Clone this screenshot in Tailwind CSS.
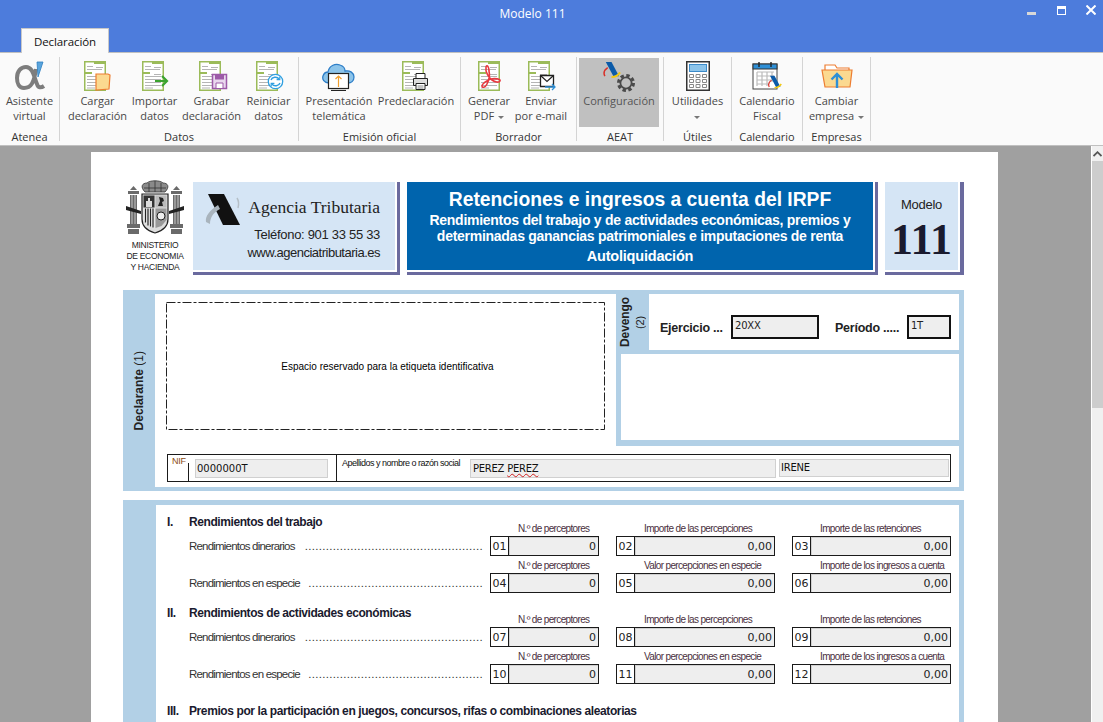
<!DOCTYPE html>
<html lang="es">
<head>
<meta charset="utf-8">
<title>Modelo 111</title>
<script src="https://cdn.jsdelivr.net/npm/@tailwindcss/browser@4"></script>
</head>
<body class="bg-[#a0a0a0]">
<svg class="hidden" width="0" height="0">
  <defs>
    <symbol id="doc" viewBox="0 0 22 30">
      <rect x="0.75" y="0.75" width="20.5" height="28.5" fill="#fff" stroke="#9bbb59" stroke-width="1.5"/>
      <rect x="10" y="0" width="12" height="3" fill="#9bbb59"/>
      <rect x="0" y="11" width="8" height="2" fill="#9bbb59"/>
      <path d="M3 5.5h6M12 6.5h7M3 8.5h15M12 13.5h7M3 15.5h16M3 18.5h16M3 21.5h16M3 24.5h16M3 27h8" stroke="#b5b5b5" stroke-width="1" fill="none"/>
    </symbol>
    <symbol id="aeat" viewBox="0 0 20 20">
      <path d="M4 1h6l8 15h-6z" fill="#0b5aa8"/>
      <path d="M10 17c4 0 7-2 9-5" stroke="#f2c811" stroke-width="2" fill="none"/>
      <path d="M3 16C1 12 3 9 6 7" stroke="#d8312a" stroke-width="1.6" fill="none"/>
    </symbol>
  </defs>
</svg>

<div class="w-[1103px] h-[722px] overflow-hidden flex flex-col">
  <!-- barra de titulo -->
  <div class="relative h-[52px] shrink-0 bg-[#4d7cdc]">
    <div class="text-center pt-[6px] pr-[38px] text-white text-[12px] leading-[16px] font-['Open_Sans',sans-serif]">Modelo 111</div>
    <div class="absolute left-[1027px] top-[12px] w-[9px] h-[3px] bg-[#d8d8d8]"></div>
    <div class="absolute left-[1057px] top-[6px] w-[9px] h-[9px] border border-t-[3px] border-white"></div>
    <svg class="absolute left-[1086px] top-[5px]" width="10" height="10" viewBox="0 0 10 10"><path d="M0.5 0.5l9 9M9.5 0.5l-9 9" stroke="#fff" stroke-width="2"/></svg>
    <div class="absolute left-[21px] top-[28px] w-[88px] h-[25px] bg-[#fafafa] border border-b-0 border-[#c8c8c8] text-center text-[11.5px] leading-[25px] tracking-[-0.1px] text-[#111] font-['Open_Sans',sans-serif]">Declaración</div>
  </div>

  <!-- cinta -->
  <div class="h-[94px] shrink-0 flex bg-[#fafafa] border-y border-[#c0c0c0] font-['Open_Sans',sans-serif] text-[11px] leading-[15px] text-[#484848]">
    <!-- Atenea -->
    <div class="w-[59px] flex flex-col">
      <div class="h-[76px] flex justify-center pt-[8px]">
        <div class="flex flex-col items-center w-[58px]">
          <svg width="32" height="30" viewBox="0 0 32 30" class="shrink-0">
            <path d="M22 8C20 22 17 27 10 27 5 27 3 22 3 17 3 10 7 6 12 6 19 6 20 16 23 23 24 27 27 27 30 25" fill="none" stroke="#7d7d7d" stroke-width="4"/>
            <path d="M23 1h6l-5 15z" fill="#5aa5dd" stroke="#2f7fc0" stroke-width="0.8"/>
          </svg>
          <div class="text-center mt-[2px]">Asistente<br>virtual</div>
        </div>
      </div>
      <div class="text-center text-[#333]">Atenea</div>
    </div>
    <div class="w-px h-[84px] mt-[4px] bg-[#d4d4d4]"></div>

    <!-- Datos -->
    <div class="w-[238px] flex flex-col">
      <div class="h-[76px] flex pt-[8px] pl-[9px]">
        <div class="flex flex-col items-center w-[57px]">
          <svg width="32" height="30" viewBox="0 0 32 30">
            <use href="#doc" x="2" y="0" width="22" height="30"/>
            <path d="M14 13h12l2 1-1 14-13 1z" fill="#fbd990" stroke="#ed7d31" stroke-width="1.2"/>
          </svg>
          <div class="text-center mt-[2px] whitespace-nowrap">Cargar<br>declaración</div>
        </div>
        <div class="flex flex-col items-center w-[57px]">
          <svg width="32" height="30" viewBox="0 0 32 30">
            <use href="#doc" x="3" y="0" width="22" height="30"/>
            <path d="M16 20h12M23 15l5 5-5 5" fill="none" stroke="#3ba32f" stroke-width="2.2"/>
          </svg>
          <div class="text-center mt-[2px]">Importar<br>datos</div>
        </div>
        <div class="flex flex-col items-center w-[57px]">
          <svg width="32" height="30" viewBox="0 0 32 30">
            <use href="#doc" x="3" y="0" width="22" height="30"/>
            <path d="M16.5 13.5h14v14h-14z" fill="#e9d8ee" stroke="#9d5aa8" stroke-width="1.5"/>
            <path d="M19 13.5h9v5h-9z" fill="#9d5aa8"/>
            <path d="M20 22h7v5.5h-7z" fill="#fff" stroke="#9d5aa8"/>
          </svg>
          <div class="text-center mt-[2px] whitespace-nowrap">Grabar<br>declaración</div>
        </div>
        <div class="flex flex-col items-center w-[57px]">
          <svg width="32" height="30" viewBox="0 0 32 30">
            <use href="#doc" x="3" y="0" width="22" height="30"/>
            <circle cx="22.5" cy="20.5" r="7.2" fill="#fff" stroke="#2e9fe0" stroke-width="1.3"/>
            <path d="M18 19c1-3 6-4 8-1M27 22c-1 3-6 4-8 1" fill="none" stroke="#2e9fe0" stroke-width="1.4"/>
            <path d="M26.8 15.5v3.2h-3.2M18.2 25.5v-3.2h3.2" fill="none" stroke="#2e9fe0" stroke-width="1.2"/>
          </svg>
          <div class="text-center mt-[2px]">Reiniciar<br>datos</div>
        </div>
      </div>
      <div class="text-center text-[#333]">Datos</div>
    </div>
    <div class="w-px h-[84px] mt-[4px] bg-[#d4d4d4]"></div>

    <!-- Emision oficial -->
    <div class="w-[161px] flex flex-col">
      <div class="h-[76px] flex pt-[8px] pl-[5px]">
        <div class="flex flex-col items-center w-[70px]">
          <svg width="34" height="30" viewBox="0 0 34 30">
            <path d="M7 22C2 22 0 18 1 15c1-3 3-4 5-4 1-6 7-9 12-7 3 1 5 3 5 6 5-1 9 2 9 6s-3 6-6 6z" fill="#8cc4ea" stroke="#2f7fc8" stroke-width="1.3"/>
            <rect x="6.5" y="12.5" width="20" height="15" fill="#fff" stroke="#222" stroke-width="1.2"/>
            <path d="M9 29.5h15" stroke="#222" stroke-width="1.2"/>
            <path d="M16.5 26V15.5M13.5 18l3-3 3 3" fill="none" stroke="#f0a030" stroke-width="1.2"/>
          </svg>
          <div class="text-center mt-[2px] whitespace-nowrap">Presentación<br>telemática</div>
        </div>
        <div class="flex flex-col items-center w-[84px]">
          <svg width="32" height="30" viewBox="0 0 32 30">
            <use href="#doc" x="2" y="0" width="22" height="30"/>
            <path d="M16 12.5h9v5h-9z" fill="#fff" stroke="#222"/>
            <path d="M13.5 17.5h14v7h-14z" fill="#ddd" stroke="#222"/>
            <path d="M16 22.5h9v6h-9z" fill="#fff" stroke="#222"/>
            <path d="M17.5 25h6M17.5 27h6" stroke="#888"/>
          </svg>
          <div class="text-center mt-[2px] whitespace-nowrap">Predeclaración</div>
        </div>
      </div>
      <div class="text-center text-[#333]">Emisión oficial</div>
    </div>
    <div class="w-px h-[84px] mt-[4px] bg-[#d4d4d4]"></div>

    <!-- Borrador -->
    <div class="w-[115px] flex flex-col">
      <div class="h-[76px] flex pt-[8px] pl-[2px]">
        <div class="flex flex-col items-center w-[52px]">
          <svg width="32" height="30" viewBox="0 0 32 30">
            <use href="#doc" x="5" y="0" width="22" height="30"/>
            <path d="M13 6c-1 5 3 11 6 13 3 2 7 3 8 1s-5-3-9-2c-4 1-9 5-9 7s3 2 5-2 3-9 2-13c0-4-2-7-3-4z" fill="none" stroke="#e9383f" stroke-width="1.6"/>
          </svg>
          <div class="text-center mt-[2px]">Generar<br>PDF<span class="inline-block ml-[4px] align-middle border-x-[3px] border-t-[3px] border-x-transparent border-t-[#777]"></span></div>
        </div>
        <div class="flex flex-col items-center w-[52px]">
          <svg width="32" height="30" viewBox="0 0 32 30">
            <use href="#doc" x="3" y="0" width="22" height="30"/>
            <path d="M15.5 14.5h13v11h-13z" fill="#fff" stroke="#222" stroke-width="1.3"/>
            <path d="M15.5 14.5l6.5 6 6.5-6" fill="none" stroke="#222" stroke-width="1.2"/>
            <path d="M20 26h10M27 23l3 3-3 3" fill="none" stroke="#2e8fd6" stroke-width="1.3"/>
          </svg>
          <div class="text-center mt-[2px] whitespace-nowrap">Enviar<br>por e-mail</div>
        </div>
      </div>
      <div class="text-center text-[#333]">Borrador</div>
    </div>
    <div class="w-px h-[84px] mt-[4px] bg-[#d4d4d4]"></div>

    <!-- AEAT -->
    <div class="w-[86px] flex flex-col">
      <div class="h-[76px] pt-[5px] pl-[2px]">
        <div class="w-[80px] h-[69px] bg-[#c0c0c0] flex flex-col items-center pt-[3px]">
          <svg width="36" height="32" viewBox="0 0 36 32">
            <use href="#aeat" x="1" y="0" width="19" height="19"/>
            <g fill="none" stroke="#4a4a4a">
              <circle cx="25" cy="22" r="7.5" stroke-width="3" stroke-dasharray="3.4 2.5"/>
              <circle cx="25" cy="22" r="5.6" stroke-width="1.8"/>
            </g>
          </svg>
          <div class="text-center text-[#555] whitespace-nowrap">Configuración</div>
        </div>
      </div>
      <div class="text-center text-[#333]">AEAT</div>
    </div>
    <div class="w-px h-[84px] mt-[4px] bg-[#d4d4d4]"></div>

    <!-- Utiles -->
    <div class="w-[67px] flex flex-col">
      <div class="h-[76px] flex flex-col items-center pt-[8px]">
        <svg width="24" height="30" viewBox="0 0 24 30">
          <rect x="0.75" y="0.75" width="22.5" height="28.5" fill="#fff" stroke="#333" stroke-width="1.5"/>
          <rect x="3.5" y="3.5" width="17" height="7" fill="#8cc4ea" stroke="#3b8ac9"/>
          <path d="M3.5 13.5h4v3h-4zM10 13.5h4v3h-4zM16.5 13.5h4v3h-4zM3.5 18.5h4v3h-4zM10 18.5h4v3h-4zM16.5 18.5h4v3h-4zM3.5 23.5h4v3h-4zM10 23.5h4v3h-4zM16.5 23.5h4v3h-4z" fill="#fff" stroke="#888"/>
        </svg>
        <div class="text-center mt-[2px]">Utilidades<br><span class="inline-block align-middle border-x-[3px] border-t-[3px] border-x-transparent border-t-[#777]"></span></div>
      </div>
      <div class="text-center text-[#333]">Útiles</div>
    </div>
    <div class="w-px h-[84px] mt-[4px] bg-[#d4d4d4]"></div>

    <!-- Calendario -->
    <div class="w-[70px] flex flex-col">
      <div class="h-[76px] flex flex-col items-center pt-[8px]">
        <svg width="30" height="30" viewBox="0 0 30 30">
          <rect x="1" y="3" width="24" height="25" fill="#fff" stroke="#444"/>
          <rect x="1" y="3" width="24" height="5" fill="#2e8fd6" stroke="#333"/>
          <path d="M7 1v5M19 1v5" stroke="#222" stroke-width="1.4"/>
          <path d="M5 11h17M5 15h17M5 19h17M5 23h12M5 11v14M10 11v14M15 11v14M20 11v10" stroke="#bbb" stroke-width="1.2" fill="none"/>
          <use href="#aeat" x="15" y="14" width="15" height="15"/>
        </svg>
        <div class="text-center mt-[2px]">Calendario<br>Fiscal</div>
      </div>
      <div class="text-center text-[#333]">Calendario</div>
    </div>
    <div class="w-px h-[84px] mt-[4px] bg-[#d4d4d4]"></div>

    <!-- Empresas -->
    <div class="w-[67px] flex flex-col">
      <div class="h-[76px] flex flex-col items-center pt-[8px]">
        <svg width="32" height="30" viewBox="0 0 32 30">
          <path d="M4 9V4h10l2 3h12v5" fill="#fff" stroke="#ed7d31" stroke-width="1.2"/>
          <path d="M1 9h30l-2 17H4z" fill="#fbd990" stroke="#ed7d31" stroke-width="1.2"/>
          <path d="M16 27V13M10.5 18.500L16 13l5.500 5.500" fill="none" stroke="#2e8fd6" stroke-width="2.4"/>
        </svg>
        <div class="text-center mt-[2px] whitespace-nowrap">Cambiar<br>empresa<span class="inline-block ml-[4px] align-middle border-x-[3px] border-t-[3px] border-x-transparent border-t-[#777]"></span></div>
      </div>
      <div class="text-center text-[#333]">Empresas</div>
    </div>
    <div class="w-px h-[84px] mt-[4px] bg-[#d4d4d4]"></div>
  </div>

  <!-- area del documento -->
  <div class="flex-1 flex overflow-hidden">
    <div class="flex-1 overflow-hidden pt-[6px] pl-[91px]">
      <div class="w-[907px] h-[900px] bg-white pt-[30px] pl-[32px] font-['Liberation_Sans',sans-serif] text-[#222]">

        <!-- cabecera -->
        <div class="flex h-[93px]">
          <div class="w-[64px] mr-[6px] flex flex-col items-center">
            <svg width="60" height="58" viewBox="0 0 60 58" class="-mt-[2px] shrink-0">
              <g fill="#6a6a6a">
                <rect x="5" y="15" width="7" height="29"/><rect x="48" y="15" width="7" height="29"/>
                <rect x="2" y="44" width="13" height="4"/><rect x="45" y="44" width="13" height="4"/>
                <rect x="3" y="49" width="11" height="5"/><rect x="46" y="49" width="11" height="5"/>
                <rect x="3" y="11" width="11" height="3"/><rect x="46" y="11" width="11" height="3"/>
                <path d="M5 10l3.500-4 3.500 4zM48 10l3.500-4 3.500 4z"/>
              </g>
              <path d="M7 15v29M10 15v29M50 15v29M53 15v29" stroke="#ddd" stroke-width="0.8"/>
              <path d="M1 26l15 5v3L1 30zM59 26l-15 5v3l15-4z" fill="#222"/>
              <path d="M20 12C15 7 17 3 22 3c3-3 13-3 16 0 5 0 7 4 2 9z" fill="#8a8a8a" stroke="#333" stroke-width="0.8"/>
              <path d="M24 3v9M30 1v11M36 3v9M19 8h22" stroke="#333" stroke-width="0.8"/>
              <path d="M17 14h26v25c0 8-6 12-13 14-7-2-13-6-13-14z" fill="#ddd" stroke="#222" stroke-width="1.2"/>
              <rect x="18.500" y="15.500" width="11" height="12" fill="#333"/>
              <path d="M21 27v-6h2v-3h2v3h2v6z" fill="#ddd"/>
              <rect x="30.500" y="15.500" width="11" height="12" fill="#bbb"/>
              <path d="M33 26l2-5-1-4 4 1 1 3-2 1 1 4z" fill="#222"/>
              <path d="M18.500 28.500h11v20l-5-2-6-6z" fill="#eee"/>
              <path d="M20.500 28.500v14M23 28.500v17M25.500 28.500v18M28 28.500v19" stroke="#222" stroke-width="1.200"/>
              <path d="M30.500 28.500h11V40l-5 6-6 2z" fill="#999"/>
              <circle cx="36" cy="36" r="4" fill="#eee" stroke="#222"/>
            </svg>
            <div class="mt-[2px] text-[8.5px] leading-[11px] text-center tracking-[-0.3px] text-[#222] whitespace-nowrap">MINISTERIO<br>DE ECONOMIA<br>Y HACIENDA</div>
          </div>

          <div class="w-[207px] h-[93px] pr-[2px] pb-[2px] border-r-[3px] border-b-[3px] border-[#6a6a9e]">
            <div class="relative h-[88px] bg-[#d5e5f5]">
              <svg class="absolute left-[12px] top-[10px]" width="38" height="36" viewBox="0 0 38 36">
                <path d="M3 2h16l16 31H18z" fill="#111"/>
                <path d="M1 30C0 24 5 18 13 13l2 4C9 20 5 25 5 32z" fill="#a9b4bd"/>
                <path d="M32 6c2 3 2 6 1 10" fill="none" stroke="#b5bfc7" stroke-width="1.500"/>
              </svg>
              <div class="absolute right-[15px] top-[12px] font-['Liberation_Serif',serif] text-[17.5px] leading-[26px] text-[#222] whitespace-nowrap">Agencia Tributaria</div>
              <div class="absolute right-[15px] top-[44px] text-[13px] leading-[18px] text-right tracking-[-0.3px] whitespace-nowrap">Teléfono: 901 33 55 33<br><span class="tracking-[-0.5px]">www.agenciatributaria.es</span></div>
            </div>
          </div>

          <div class="ml-[7px] w-[471px] h-[93px] pr-[2px] pb-[2px] border-r-[3px] border-b-[3px] border-[#6a6a9e]">
            <div class="h-[88px] bg-[#0064ad] text-white text-center font-bold">
              <div class="pt-[5px] text-[19.3px] leading-[25px]">Retenciones e ingresos a cuenta del IRPF</div>
              <div class="text-[14px] leading-[16px] tracking-[-0.27px]">Rendimientos del trabajo y de actividades económicas, premios y<br>determinadas ganancias patrimoniales e imputaciones de renta</div>
              <div class="mt-[2px] text-[14.5px] leading-[20px] tracking-[-0.2px]">Autoliquidación</div>
            </div>
          </div>

          <div class="ml-[7px] w-[79px] h-[93px] pr-[2px] pb-[2px] border-r-[4px] border-b-[3px] border-[#6a6a9e]">
            <div class="h-[88px] bg-[#d5e5f5] text-center">
              <div class="pt-[15px] text-[13px] leading-[15px] tracking-[-0.3px]">Modelo</div>
              <div class="mt-[6px] font-['Liberation_Serif',serif] font-bold text-[44px] leading-[44px] text-[#1a1a2e]">111</div>
            </div>
          </div>
        </div>

        <!-- Declarante -->
        <div class="mt-[15px] w-[841px] flex bg-[#b2d0e6] pt-[4px] pr-[5px] pb-[4px]">
          <div class="w-[32px] flex items-center justify-center">
            <div class="[writing-mode:vertical-rl] rotate-180 text-[12px] leading-[14px] font-bold whitespace-nowrap">Declarante <span class="font-normal">(1)</span></div>
          </div>
          <div class="w-[804px] h-[193px] bg-white">
            <div class="flex h-[152px]">
              <div class="w-[461px] pl-[11px] pt-[8px]">
                <div class="relative w-[439px] h-[128px] flex items-center justify-center pl-[4px] text-[10px] text-black">
                  <svg class="absolute inset-0" width="439" height="128"><rect x="0.5" y="0.5" width="438" height="127" fill="none" stroke="#222" stroke-dasharray="9 2 3 2"/></svg>
                  Espacio reservado para la etiqueta identificativa
                </div>
              </div>
              <div class="w-[343px] bg-[#b2d0e6]">
                <div class="flex h-[56px]">
                  <div class="w-[33px] flex items-center justify-center">
                    <div class="[writing-mode:vertical-rl] rotate-180 text-[12px] leading-[15px] font-bold tracking-[-0.1px] text-center whitespace-nowrap">Devengo<br><span class="font-normal text-[11px]">(2)</span></div>
                  </div>
                  <div class="flex-1 bg-white flex items-center pl-[11px] pt-[9px] text-[12.5px] font-bold tracking-[-0.25px]">
                    <span class="w-[71px] pt-[3px] whitespace-nowrap">Ejercicio ...</span>
                    <div class="w-[88px] h-[24px] border-2 border-[#111] bg-[#eee] px-[2px] font-['DejaVu_Sans',sans-serif] font-normal text-[10px] leading-[18px] tracking-[-0.2px]">20XX</div>
                    <span class="ml-[16px] w-[72px] pt-[3px] whitespace-nowrap">Período .....</span>
                    <div class="w-[44px] h-[24px] border-2 border-[#111] bg-[#eee] px-[2px] font-['DejaVu_Sans',sans-serif] font-normal text-[10px] leading-[18px]">1T</div>
                  </div>
                </div>
                <div class="mt-[4px] ml-[5px] h-[86px] bg-white"></div>
              </div>
            </div>
            <div class="mt-[8px] ml-[12px] w-[784px] h-[28px] border border-[#1a1a1a] flex font-['DejaVu_Sans',sans-serif] text-[10px] text-[#111]">
              <div class="w-[169px] flex border-r border-[#1a1a1a]">
                <div class="w-[20px] pl-[4px] pt-[1px] font-['Liberation_Sans',sans-serif] text-[9px] leading-[11px] tracking-[-0.3px] text-[#8a4a10]">NIF</div>
                <div class="w-px h-[18px] mt-[8px] bg-[#1a1a1a]"></div>
                <div class="ml-[6px] mt-[4px] w-[133px] h-[19px] bg-[#eee] border border-[#d0d0d0] pl-[1px] leading-[18px]">0000000T</div>
              </div>
              <div class="flex-1 flex">
                <div class="w-[133px] pl-[5px] pt-[3px] font-['Liberation_Sans',sans-serif] text-[9px] leading-[11px] tracking-[-0.5px] whitespace-nowrap">Apellidos y nombre o razón social</div>
                <div class="mt-[4px] w-[306px] h-[19px] bg-[#eee] border border-[#d0d0d0] pl-[2px] leading-[17px] tracking-[-0.25px]">PEREZ <span class="underline decoration-wavy decoration-[#d02020]">PEREZ</span></div>
                <div class="ml-[3px] mt-[4px] w-[170px] h-[18px] bg-[#eee] border border-[#d0d0d0] pl-[1px] leading-[16px] tracking-[-0.25px]">IRENE</div>
              </div>
            </div>
          </div>
        </div>

        <!-- Liquidacion -->
        <div class="mt-[9px] w-[841px] flex bg-[#b2d0e6] pt-[5px] pr-[5px]">
          <div class="w-[33px] shrink-0"></div>
          <div class="w-[803px] h-[400px] bg-white pt-[8px] pl-[11px]">
            <div class="flex">
              <div class="w-[316px]">
                <div class="flex h-[18px] items-center text-[12px] font-bold tracking-[-0.42px] text-[#1a1a2e]"><span class="w-[22px]">I.</span>Rendimientos del trabajo</div>
                <div class="mt-[5px] h-[20px] pt-[1px] pl-[22px] flex items-center justify-between text-[11.5px] tracking-[-0.8px] text-[#333] whitespace-nowrap">Rendimientos dinerarios<span class="tracking-[0.3px]">...................................................</span></div>
                <div class="mt-[17px] h-[20px] pt-[1px] pl-[22px] flex items-center justify-between text-[11.5px] tracking-[-0.8px] text-[#333] whitespace-nowrap">Rendimientos en especie<span class="tracking-[0.3px]">..................................................</span></div>
              </div>
              <div id="grupo1" class="ml-[7px] pt-[7px]"></div>
            </div>
            <div class="flex mt-[11px]">
              <div class="w-[316px]">
                <div class="flex h-[18px] items-center text-[12px] font-bold tracking-[-0.42px] text-[#1a1a2e]"><span class="w-[22px]">II.</span>Rendimientos de actividades económicas</div>
                <div class="mt-[5px] h-[20px] pt-[1px] pl-[22px] flex items-center justify-between text-[11.5px] tracking-[-0.8px] text-[#333] whitespace-nowrap">Rendimientos dinerarios<span class="tracking-[0.3px]">...................................................</span></div>
                <div class="mt-[17px] h-[20px] pt-[1px] pl-[22px] flex items-center justify-between text-[11.5px] tracking-[-0.8px] text-[#333] whitespace-nowrap">Rendimientos en especie<span class="tracking-[0.3px]">..................................................</span></div>
              </div>
              <div id="grupo2" class="ml-[7px] pt-[7px]"></div>
            </div>
            <div class="flex h-[18px] mt-[18px] items-center text-[12px] font-bold tracking-[-0.4px] text-[#1a1a2e] whitespace-nowrap"><span class="w-[22px]">III.</span>Premios por la participación en juegos, concursos, rifas o combinaciones aleatorias</div>
          </div>
        </div>
      </div>
    </div>

    <!-- barra de desplazamiento -->
    <div class="w-[12px] shrink-0 flex flex-col bg-[#f0f0f0] border-l border-white">
      <div class="h-[15px] flex items-center justify-center">
        <svg width="9" height="6" viewBox="0 0 9 6"><path d="M0.500 5L4.500 1.200 8.500 5" fill="none" stroke="#555" stroke-width="1.800"/></svg>
      </div>
      <div class="h-[247px] bg-[#cdcdcd]"></div>
    </div>
  </div>
</div>

<script>
function campo(titulo, num, valor) {
    return `
    <div class="h-[36px]">
        <div class="h-[16px] pl-[28px] font-['Liberation_Sans',sans-serif] text-[10px] leading-[18px] tracking-[-0.65px] text-[#4a3040] whitespace-nowrap">${titulo}</div>
        <div class="h-[20px] flex border border-[#1a1a1a] font-['DejaVu_Sans',sans-serif] text-[11px] text-[#222]">
            <div class="w-[18px] border-r border-[#1a1a1a] text-center leading-[19px]">${num}</div>
            <div class="flex-1 bg-[#eee] border-t border-l border-[#d0d0d0] text-right pr-[2px] leading-[18px]">${valor}</div>
        </div>
    </div>`;
}

function filas(id, n) {
    const f = (i) => String(n + i).padStart(2, '0');
    document.getElementById(id).innerHTML = `
    <div class="grid grid-cols-[109px_159px_159px] gap-x-[17px] gap-y-[1px]">
        ${campo('N.º de perceptores', f(0), '0')}
        ${campo('Importe de las percepciones', f(1), '0,00')}
        ${campo('Importe de las retenciones', f(2), '0,00')}
        ${campo('N.º de perceptores', f(3), '0')}
        ${campo('Valor percepciones en especie', f(4), '0,00')}
        ${campo('Importe de los ingresos a cuenta', f(5), '0,00')}
    </div>`;
}

filas('grupo1', 1);
filas('grupo2', 7);
</script>
</body>
</html>
